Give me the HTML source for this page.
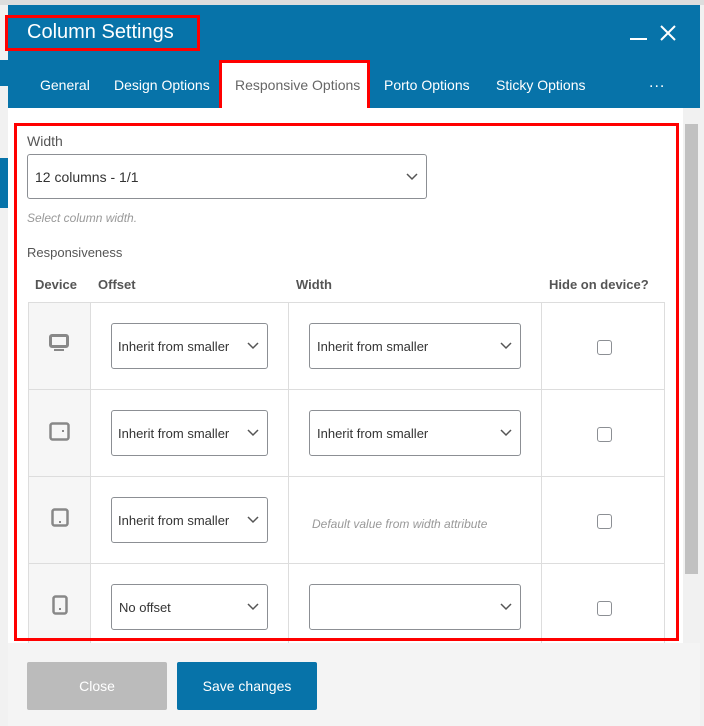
<!DOCTYPE html>
<html><head><meta charset="utf-8"><style>
*{box-sizing:border-box;margin:0;padding:0}
body{width:704px;height:726px;overflow:hidden;background:#f1f1f1;font-family:"Liberation Sans",sans-serif;position:relative;color:#555}
.a{position:absolute}
.sel{position:absolute;border:1px solid #8c8f94;border-radius:3px;background:#fff;font-size:13px;color:#333;padding-left:7px;display:flex;align-items:center}
.sel svg{position:absolute;right:8px;top:50%;margin-top:-4px}
.cb{position:absolute;width:15px;height:15px;border:1px solid #8c8f94;border-radius:3px;background:#fff}
.vl{position:absolute;width:1px;background:#ddd}
.hl{position:absolute;height:1px;background:#ddd}
.th{position:absolute;top:277px;font-size:13px;font-weight:bold;color:#555}
</style></head><body>
<div class="a" style="left:0;top:0;width:704px;height:5px;background:#ddd"></div>
<div class="a" style="left:0;top:60px;width:8px;height:26px;background:#0773a9"></div>
<div class="a" style="left:0;top:158px;width:8px;height:50px;background:#0773a9"></div>
<!-- modal -->
<div class="a" style="left:8px;top:5px;width:692px;height:721px;background:#fff"></div>
<div class="a" style="left:8px;top:5px;width:692px;height:103px;background:#0773a9"></div>
<div class="a" style="left:5px;top:15px;width:195px;height:36px;border:3px solid #f00"></div>
<div class="a" style="left:27px;top:21px;font-size:20px;color:#fff">Column Settings</div>
<div class="a" style="left:630px;top:38px;width:17px;height:2px;background:#fff"></div>
<svg class="a" style="left:660px;top:25px" width="16" height="16"><path d="M1 1L15 15M15 1L1 15" stroke="#fff" stroke-width="2"/></svg>
<div class="a" style="left:40px;top:77px;font-size:14px;color:#fff">General</div>
<div class="a" style="left:114px;top:77px;font-size:14px;color:#fff">Design Options</div>
<div class="a" style="left:219px;top:60px;width:151px;height:48px;background:#fff;border:3px solid #f00;border-bottom:none"></div>
<div class="a" style="left:235px;top:77px;font-size:14px;color:#666">Responsive Options</div>
<div class="a" style="left:384px;top:77px;font-size:14px;color:#fff">Porto Options</div>
<div class="a" style="left:496px;top:77px;font-size:14px;color:#fff">Sticky Options</div>
<div class="a" style="left:649px;top:74px;font-size:16px;color:#fff;letter-spacing:1px">...</div>
<!-- scrollbar -->
<div class="a" style="left:683px;top:108px;width:17px;height:535px;background:#f1f1f1"></div>
<div class="a" style="left:685px;top:124px;width:13px;height:450px;background:#c1c1c1"></div>
<!-- content -->
<div class="a" style="left:27px;top:133px;font-size:14px;color:#555">Width</div>
<div class="sel" style="left:27px;top:154px;width:400px;height:45px;font-size:14px">12 columns - 1/1<svg width="12" height="8"><path d="M1 1l5 5 5-5" fill="none" stroke="#555" stroke-width="1.5"/></svg></div>
<div class="a" style="left:27px;top:211px;font-size:12px;font-style:italic;color:#999">Select column width.</div>
<div class="a" style="left:27px;top:245px;font-size:13px;color:#555">Responsiveness</div>
<div class="th" style="left:35px">Device</div>
<div class="th" style="left:98px">Offset</div>
<div class="th" style="left:296px">Width</div>
<div class="th" style="left:549px">Hide on device?</div>
<div class="a" style="left:28px;top:302px;width:62px;height:341px;background:#f6f6f6"></div>
<div class="hl" style="left:28px;top:302px;width:636px"></div>
<div class="hl" style="left:28px;top:389px;width:636px"></div>
<div class="hl" style="left:28px;top:476px;width:636px"></div>
<div class="hl" style="left:28px;top:563px;width:636px"></div>
<div class="vl" style="left:28px;top:302px;height:341px"></div>
<div class="vl" style="left:90px;top:302px;height:341px"></div>
<div class="vl" style="left:288px;top:302px;height:341px"></div>
<div class="vl" style="left:541px;top:302px;height:341px"></div>
<div class="vl" style="left:664px;top:302px;height:341px"></div>
<!-- icons -->
<svg class="a" style="left:49px;top:334px" width="21" height="19"><rect x="1.5" y="1.5" width="17" height="11" rx="1.5" fill="none" stroke="#888" stroke-width="3"/><rect x="5" y="15" width="10" height="2" fill="#888"/></svg>
<svg class="a" style="left:49px;top:422px" width="22" height="19"><rect x="1.5" y="1.5" width="18" height="16" rx="2" fill="none" stroke="#888" stroke-width="2.5"/><rect x="13" y="8" width="2" height="2" fill="#888"/></svg>
<svg class="a" style="left:51px;top:508px" width="18" height="19"><rect x="1.5" y="1.5" width="15" height="16" rx="2" fill="none" stroke="#888" stroke-width="2.5"/><rect x="8" y="13" width="2" height="2" fill="#888"/></svg>
<svg class="a" style="left:52px;top:595px" width="16" height="20"><rect x="1.5" y="1.5" width="13" height="17" rx="2" fill="none" stroke="#888" stroke-width="2.5"/><rect x="7" y="13" width="2" height="2" fill="#888"/></svg>
<!-- selects -->
<div class="sel" style="left:111px;top:323px;width:157px;height:46px;padding-left:6px">Inherit from smaller<svg width="12" height="8"><path d="M1 1l5 5 5-5" fill="none" stroke="#555" stroke-width="1.5"/></svg></div>
<div class="sel" style="left:309px;top:323px;width:212px;height:46px">Inherit from smaller<svg width="12" height="8"><path d="M1 1l5 5 5-5" fill="none" stroke="#555" stroke-width="1.5"/></svg></div>
<div class="sel" style="left:111px;top:410px;width:157px;height:46px;padding-left:6px">Inherit from smaller<svg width="12" height="8"><path d="M1 1l5 5 5-5" fill="none" stroke="#555" stroke-width="1.5"/></svg></div>
<div class="sel" style="left:309px;top:410px;width:212px;height:46px">Inherit from smaller<svg width="12" height="8"><path d="M1 1l5 5 5-5" fill="none" stroke="#555" stroke-width="1.5"/></svg></div>
<div class="sel" style="left:111px;top:497px;width:157px;height:46px;padding-left:6px">Inherit from smaller<svg width="12" height="8"><path d="M1 1l5 5 5-5" fill="none" stroke="#555" stroke-width="1.5"/></svg></div>
<div class="a" style="left:312px;top:517px;font-size:12px;font-style:italic;color:#999">Default value from width attribute</div>
<div class="sel" style="left:111px;top:584px;width:157px;height:46px">No offset<svg width="12" height="8"><path d="M1 1l5 5 5-5" fill="none" stroke="#555" stroke-width="1.5"/></svg></div>
<div class="sel" style="left:309px;top:584px;width:212px;height:46px"><svg width="12" height="8"><path d="M1 1l5 5 5-5" fill="none" stroke="#555" stroke-width="1.5"/></svg></div>
<div class="cb" style="left:597px;top:340px"></div>
<div class="cb" style="left:597px;top:427px"></div>
<div class="cb" style="left:597px;top:514px"></div>
<div class="cb" style="left:597px;top:601px"></div>
<!-- red box -->
<div class="a" style="left:14px;top:123px;width:665px;height:518px;border:3px solid #f00"></div>
<!-- footer -->
<div class="a" style="left:8px;top:643px;width:692px;height:83px;background:#f4f4f4"></div>
<div class="a" style="left:27px;top:662px;width:140px;height:48px;background:#bbb;border-radius:2px;color:#fff;font-size:14px;display:flex;align-items:center;justify-content:center">Close</div>
<div class="a" style="left:177px;top:662px;width:140px;height:48px;background:#0773a9;border-radius:2px;color:#fff;font-size:14px;display:flex;align-items:center;justify-content:center">Save changes</div>
</body></html>
